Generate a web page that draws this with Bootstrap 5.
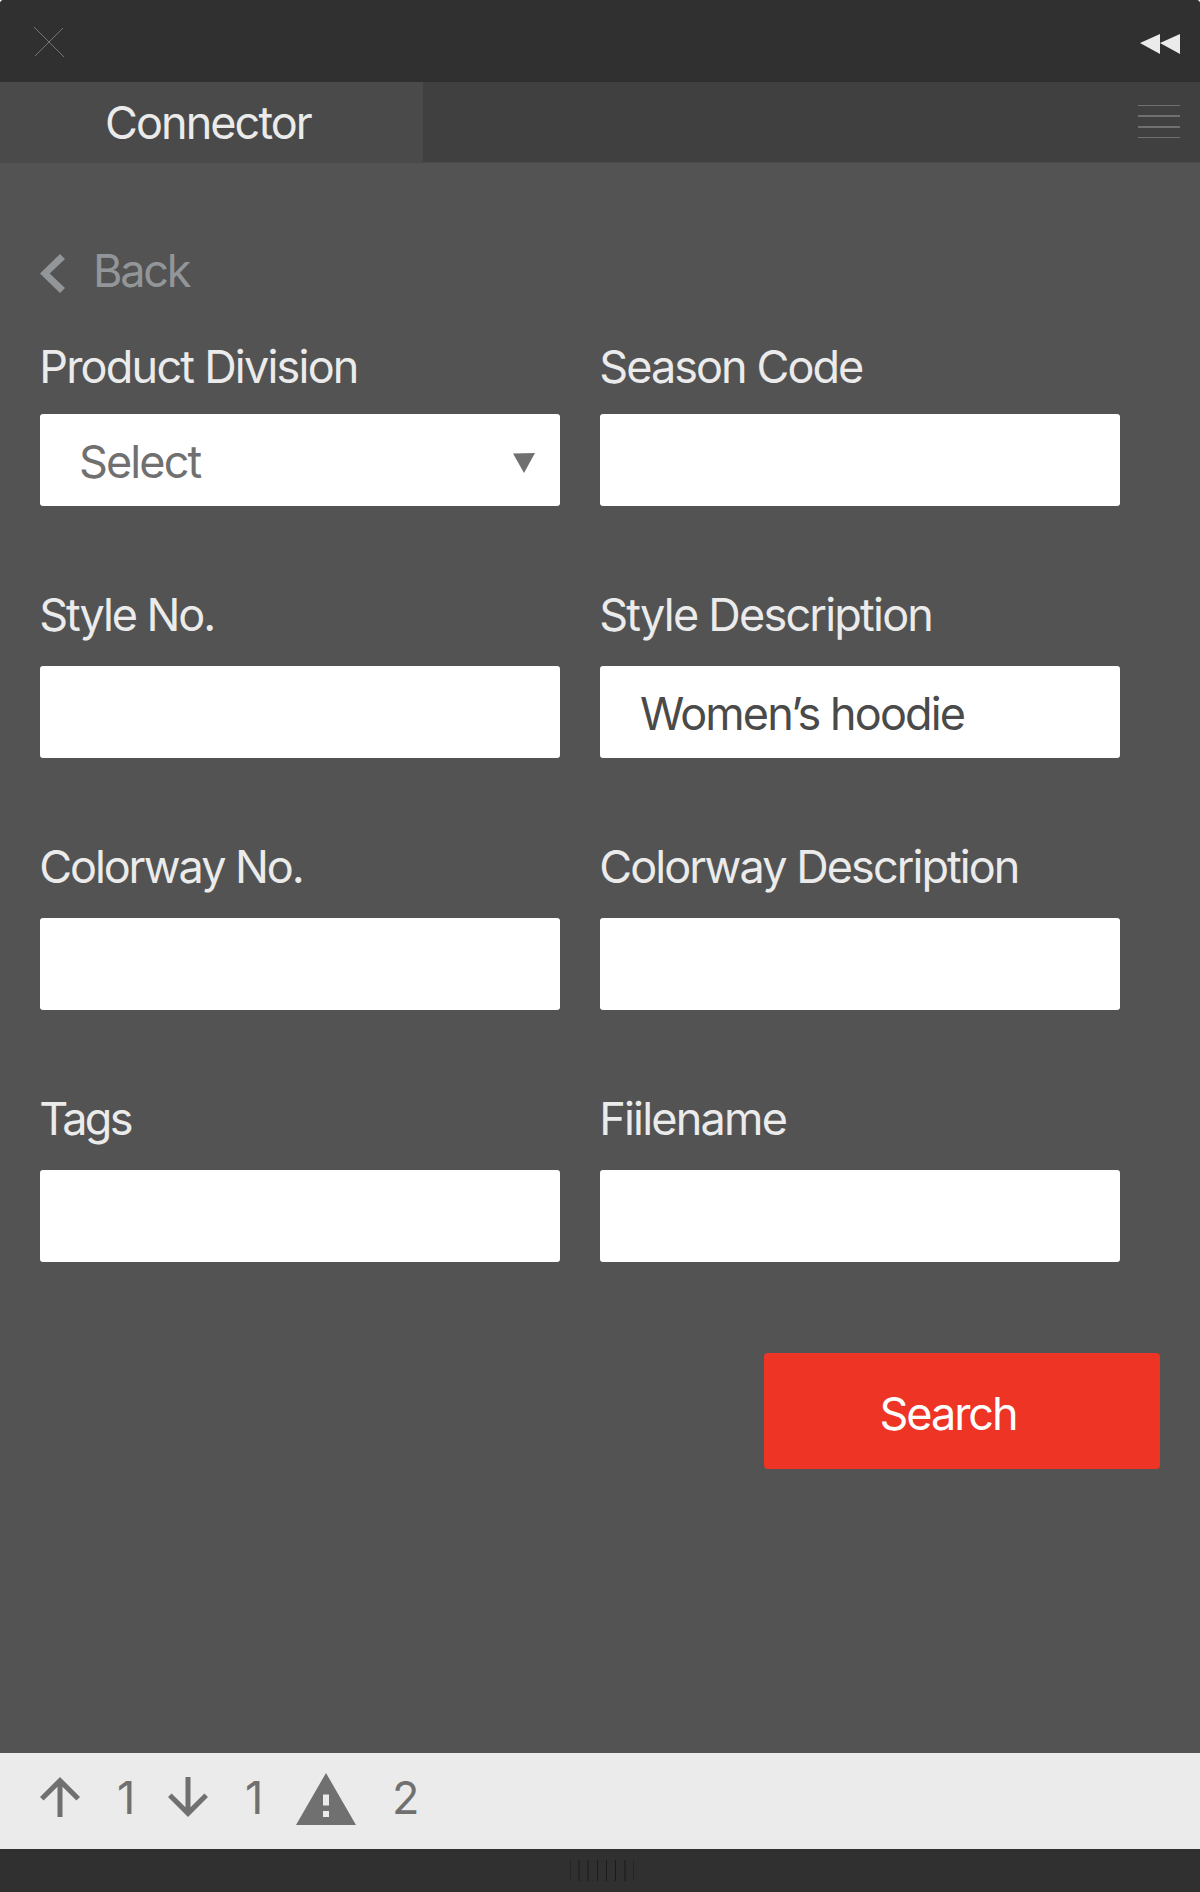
<!DOCTYPE html>
<html lang="en">
<head>
<meta charset="utf-8">
<meta name="viewport" content="width=device-width, initial-scale=1">
<title>Connector</title>
<link href="https://cdn.jsdelivr.net/npm/bootstrap@5.3.0/dist/css/bootstrap.min.css" rel="stylesheet">
<style>
  body { background: #fff; font-family: Inter, "Liberation Sans", sans-serif; font-size: 45px; line-height: 60px; letter-spacing: -1.93px; color: #ebebeb; }
  .panel { width: 1200px; height: 1892px; background: #535353; border-radius: 4px 4px 0 0; }
  .titlebar { height: 82px; background: #303030; padding: 2px 20px 0 33px; }
  .tabbar { height: 81px; background: #404040; padding-right: 20px; border-bottom: 1px solid #4b4b4b; }
  .tab-active { width: 423px; height: 81px; background: #4a4a4a; padding: 11px 0 0 105px; }
  .menu-lines { margin-top: 23px; }
  .content { padding: 78px 40px 0; }
  .back-link { gap: 28px; height: 60px; color: #929699; letter-spacing: -2.2px; }
  .back-link svg { margin-top: 5px; }
  .fields { width: 1080px; margin-top: 35px; display: grid; grid-template-columns: 520px 520px; column-gap: 40px; }
  .field { height: 252px; }
  .field-first { height: 248px; }
  .field label { height: 60px; margin-bottom: 22.3px; padding-top: 1px; text-indent: -.8px; }
  .field-first label { margin-bottom: 18.3px; }
  .field .form-control { height: 92px; border: 0; border-radius: 3px; padding: 2px 40px 0; font-size: 45px; line-height: 60px; letter-spacing: -1.88px; color: #4a4a4a; background: #fff; }
  .field .picker { color: #707070; padding: 4px 25px 0 39px; }
  .picker svg { margin-top: 2px; }
  .snug { letter-spacing: -2.08px; }
  .snugger { letter-spacing: -2.7px; }
  .loose { letter-spacing: -1.78px; }
  .btn-search { width: 396px; height: 116px; background: #ee3424; border: 0; border-radius: 4px; color: #fff; font-size: 45px; line-height: 60px; letter-spacing: -2.04px; padding: 5px 28px 0 0; }
  .btn-search:hover { background: #d92c1d; color: #fff; }
  .search-row { margin-top: 13px; }
  .statusbar { height: 96px; background: #ebebeb; color: #707070; padding-left: 40px; }
  .statusbar span { margin-top: -7px; }
  .status-arrow { margin-top: -8px; }
  .status-alert { margin-top: -5px; }
  .stat-count { width: 88px; padding-left: 37px; }
  .stat-warn { padding-left: 36px; }
  .footbar { height: 43px; background: #303030; }
  .grip { margin: 11px 0 0 6px; }
</style>
</head>
<body>
<main class="panel d-flex flex-column overflow-hidden">
  <header class="titlebar d-flex align-items-center justify-content-between">
    <svg width="32" height="32" viewBox="0 0 32 32" fill="none" stroke="#747474" stroke-width="1"><path d="M1 1l30 30M2 30L30 2"/></svg>
    <svg width="40" height="20" viewBox="0 0 40 20" fill="#ebebeb" class="mt-1"><path d="M0 9L20 0v20zM20 9L40 0v20z"/></svg>
  </header>
  <nav class="tabbar d-flex justify-content-between">
    <div class="tab-active flex-shrink-0">Connector</div>
    <svg width="42" height="34" viewBox="0 0 42 34" class="menu-lines" fill="#707070"><path d="M0 0h42v1H0zM0 10h42v2H0zM0 21h42v2H0zM0 32h42v1H0z"/></svg>
  </nav>
  <section class="content flex-grow-1">
    <div class="back-link d-flex align-items-center">
      <svg width="25" height="39" viewBox="0 0 25 39" fill="#929699"><path d="M20 0l5 5L9.700 19.500 25 34l-5 5L0 19.500z"/></svg>
      <span>Back</span>
    </div>
    <form class="fields">
      <div class="field field-first"><label class="d-block loose">Product Division</label>
        <button type="button" class="form-control picker d-flex align-items-center justify-content-between"><span>Select</span><svg width="22" height="20" viewBox="0 0 22 20" fill="#707070"><path d="M0 .5L22 0 11 20z"/></svg></button></div>
      <div class="field field-first"><label class="d-block" for="season">Season Code</label><input id="season" class="form-control"></div>
      <div class="field"><label class="d-block snug" for="style">Style No.</label><input id="style" class="form-control"></div>
      <div class="field"><label class="d-block loose" for="styledesc">Style Description</label><input id="styledesc" class="form-control" value="Women’s hoodie"></div>
      <div class="field"><label class="d-block snug" for="colorway">Colorway No.</label><input id="colorway" class="form-control"></div>
      <div class="field"><label class="d-block" for="colordesc">Colorway Description</label><input id="colordesc" class="form-control"></div>
      <div class="field"><label class="d-block snugger" for="tags">Tags</label><input id="tags" class="form-control"></div>
      <div class="field"><label class="d-block loose" for="filename">Fiilename</label><input id="filename" class="form-control"></div>
    </form>
    <div class="search-row d-flex justify-content-end"><button type="button" class="btn btn-search">Search</button></div>
  </section>
  <footer class="flex-shrink-0">
    <div class="statusbar d-flex align-items-center">
      <svg width="40" height="40" viewBox="0 0 40 40" class="status-arrow flex-shrink-0" fill="#707070"><path d="M0 20l3.600 3.600L17.500 9.700V40h5V9.700L36.400 23.600 40 20 20 0z"/></svg>
      <span class="stat-count">1</span>
      <svg width="40" height="40" viewBox="0 0 40 40" class="status-arrow flex-shrink-0" fill="#707070"><path d="M40 20l-3.600-3.600L22.500 30.300V0h-5v30.300L3.600 16.400 0 20l20 20z"/></svg>
      <span class="stat-count">1</span>
      <svg width="60" height="52" viewBox="0 0 60 52" class="status-alert flex-shrink-0" fill="#707070" fill-rule="evenodd"><path d="M30 0l30 52H0zM27 21.500v11h6v-11zM27 38v6h6v-6z"/></svg>
      <span class="stat-warn">2</span>
    </div>
    <div class="footbar d-flex justify-content-center">
      <svg width="66" height="22" viewBox="0 0 66 22" class="grip"><path fill="#252525" d="M0 0h1v21H0zM8 0h2v21H8zM17 0h2v21h-2zM54 0h2v21h-2zM63 0h1v21h-1z"/><path fill="#1b1b1b" d="M27 0h1v21h-1zM36 0h1v21h-1zM45 0h1v21h-1z"/></svg>
    </div>
  </footer>
</main>
<script src="https://cdn.jsdelivr.net/npm/bootstrap@5.3.0/dist/js/bootstrap.bundle.min.js"></script>
</body>
</html>
